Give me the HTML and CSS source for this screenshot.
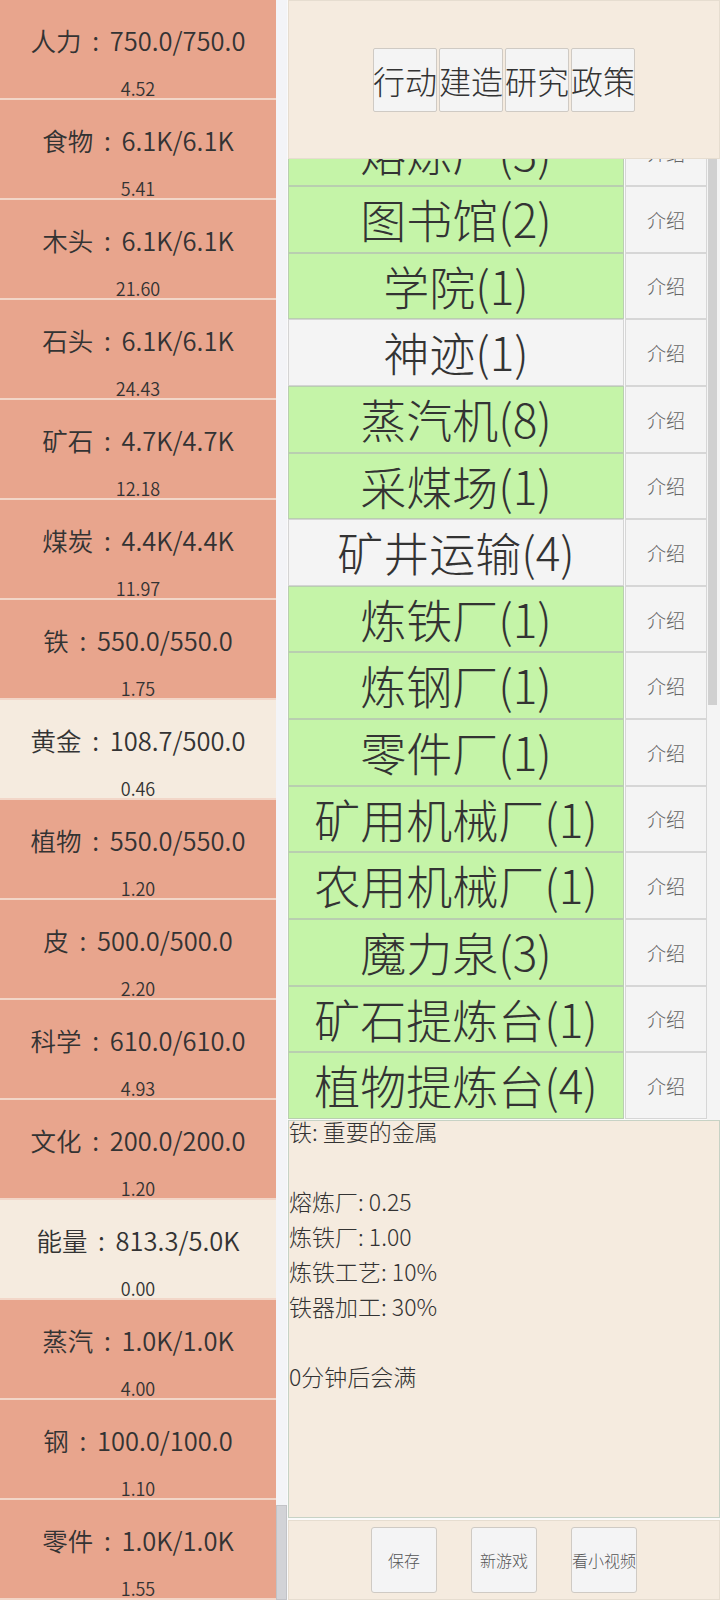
FILE: index.html
```html
<!DOCTYPE html>
<html lang="zh-CN">
<head>
    <meta charset="UTF-8">
    <meta name="viewport" content="width=device-width, initial-scale=1.0">
    <title>资源</title>
    <link rel="stylesheet" href="styles.css">
</head>
<body>
    <div class="resources">
        <div class="res"><div class="res-name">人力 : 750.0/750.0</div><div class="res-rate">4.52</div></div>
        <div class="res"><div class="res-name">食物 : 6.1K/6.1K</div><div class="res-rate">5.41</div></div>
        <div class="res"><div class="res-name">木头 : 6.1K/6.1K</div><div class="res-rate">21.60</div></div>
        <div class="res"><div class="res-name">石头 : 6.1K/6.1K</div><div class="res-rate">24.43</div></div>
        <div class="res"><div class="res-name">矿石 : 4.7K/4.7K</div><div class="res-rate">12.18</div></div>
        <div class="res"><div class="res-name">煤炭 : 4.4K/4.4K</div><div class="res-rate">11.97</div></div>
        <div class="res"><div class="res-name">铁 : 550.0/550.0</div><div class="res-rate">1.75</div></div>
        <div class="res not-full"><div class="res-name">黄金 : 108.7/500.0</div><div class="res-rate">0.46</div></div>
        <div class="res"><div class="res-name">植物 : 550.0/550.0</div><div class="res-rate">1.20</div></div>
        <div class="res"><div class="res-name">皮 : 500.0/500.0</div><div class="res-rate">2.20</div></div>
        <div class="res"><div class="res-name">科学 : 610.0/610.0</div><div class="res-rate">4.93</div></div>
        <div class="res"><div class="res-name">文化 : 200.0/200.0</div><div class="res-rate">1.20</div></div>
        <div class="res not-full"><div class="res-name">能量 : 813.3/5.0K</div><div class="res-rate">0.00</div></div>
        <div class="res"><div class="res-name">蒸汽 : 1.0K/1.0K</div><div class="res-rate">4.00</div></div>
        <div class="res"><div class="res-name">钢 : 100.0/100.0</div><div class="res-rate">1.10</div></div>
        <div class="res"><div class="res-name">零件 : 1.0K/1.0K</div><div class="res-rate">1.55</div></div>
    </div>
    <div class="scrollbar left-bar"><div class="thumb"></div></div>

    <div class="main">
        <div class="tabs">
            <button class="tab">行动</button>
            <button class="tab">建造</button>
            <button class="tab">研究</button>
            <button class="tab">政策</button>
        </div>

        <div class="buildings">
            <div class="building-list">
                <div class="rows">
                    <div class="row"><div class="bname">熔炼厂(3)</div><button class="info">介绍</button></div>
                    <div class="row"><div class="bname">图书馆(2)</div><button class="info">介绍</button></div>
                    <div class="row"><div class="bname">学院(1)</div><button class="info">介绍</button></div>
                    <div class="row"><div class="bname locked">神迹(1)</div><button class="info">介绍</button></div>
                    <div class="row"><div class="bname">蒸汽机(8)</div><button class="info">介绍</button></div>
                    <div class="row"><div class="bname">采煤场(1)</div><button class="info">介绍</button></div>
                    <div class="row"><div class="bname locked">矿井运输(4)</div><button class="info">介绍</button></div>
                    <div class="row"><div class="bname">炼铁厂(1)</div><button class="info">介绍</button></div>
                    <div class="row"><div class="bname">炼钢厂(1)</div><button class="info">介绍</button></div>
                    <div class="row"><div class="bname">零件厂(1)</div><button class="info">介绍</button></div>
                    <div class="row"><div class="bname">矿用机械厂(1)</div><button class="info">介绍</button></div>
                    <div class="row"><div class="bname">农用机械厂(1)</div><button class="info">介绍</button></div>
                    <div class="row"><div class="bname">魔力泉(3)</div><button class="info">介绍</button></div>
                    <div class="row"><div class="bname">矿石提炼台(1)</div><button class="info">介绍</button></div>
                    <div class="row"><div class="bname">植物提炼台(4)</div><button class="info">介绍</button></div>
                </div>
            </div>
            <div class="scrollbar list-bar"><div class="thumb"></div></div>
        </div>

        <div class="desc">
            <p>铁: 重要的金属</p>
            <p>&nbsp;</p>
            <p>熔炼厂: 0.25</p>
            <p>炼铁厂: 1.00</p>
            <p>炼铁工艺: 10%</p>
            <p>铁器加工: 30%</p>
            <p>&nbsp;</p>
            <p>0分钟后会满</p>
        </div>

        <div class="footer">
            <button class="small-btn">保存</button>
            <button class="small-btn">新游戏</button>
            <button class="small-btn">看小视频</button>
        </div>
    </div>
</body>
</html>
```

FILE: styles.css
```css
* {
    box-sizing: border-box;
    margin: 0;
    padding: 0;
}
body {
    display: flex;
    width: 720px;
    height: 1600px;
    overflow: hidden;
    background: #fafafa;
    font-family: "Noto Sans CJK SC", "Noto Sans", sans-serif;
    color: #333;
}
button {
    font-family: inherit;
    cursor: pointer;
}

/* left: resource list */
.resources {
    width: 276px;
    display: flex;
    flex-direction: column;
}
.res {
    height: 100px;
    background: #e8a58d;
    border-bottom: 2px solid #f2d6c8;
    display: flex;
    flex-direction: column;
    align-items: center;
}
.res.not-full {
    background: #f5ebdf;
}
.res-name {
    height: 78px;
    line-height: 80px;
    font-size: 25.5px;
    font-weight: 350;
    word-spacing: 5px;
    white-space: nowrap;
}
.res-rate {
    font-size: 18px;
    line-height: 20px;
    font-weight: 350;
}

/* fake scrollbars */
.scrollbar {
    display: flex;
    flex-direction: column;
    background: #f3f4f7;
}
.thumb {
    background: #d2d3d7;
    border: 1px solid #c2c3c7;
}
.left-bar {
    width: 11px;
    margin-right: 1px;
    justify-content: flex-end;
}
.left-bar .thumb {
    height: 95px;
}
.list-bar {
    width: 13px;
    padding-left: 1px;
    background: #f4f4f4;
}
.list-bar .thumb {
    width: 9px;
    height: 546px;
    border: none;
    background: #d0d0d0;
}

/* right side */
.main {
    width: 432px;
    display: flex;
    flex-direction: column;
}
.tabs {
    height: 159px;
    background: #f5ebdf;
    border: 1px solid #e6ddd0;
    display: flex;
    justify-content: center;
    align-items: center;
    gap: 2px;
}
.tab {
    width: 64px;
    height: 64px;
    font-size: 32px;
    font-weight: 300;
    color: #333;
    background: #f4f4f4;
    border: 1px solid #cfcac4;
    border-radius: 2px;
    white-space: nowrap;
    overflow: visible;
    display: flex;
    justify-content: center;
    align-items: center;
}

.buildings {
    height: 961px;
    display: flex;
}
.building-list {
    flex: 1;
    overflow: hidden;
}
.rows {
    margin-top: -39.6px;
}
.row {
    height: 66.64px;
    display: flex;
    gap: 1px;
}
.bname {
    width: 336px;
    background: #c5f4a8;
    border: 1px solid #b9ceb0;
    font-size: 46px;
    font-weight: 300;
    line-height: 62px;
    text-align: center;
    white-space: nowrap;
    color: #333;
}
.bname.locked {
    background: #f4f4f4;
    border-color: #d4d4d4;
}
.info {
    flex: 1;
    background: #f4f4f4;
    border: 1px solid #d6d6d6;
    font-size: 19px;
    font-weight: 300;
    color: #666;
}

.desc {
    height: 398px;
    background: #f5ebdf;
    border: 1px solid #c7d2c5;
    font-size: 23px;
    font-weight: 300;
    line-height: 35px;
    color: #333;
}
.desc p {
    white-space: pre;
}
.desc p:first-child {
    margin-top: -7px;
}

.footer {
    flex: 1;
    margin-top: 2px;
    background: #f5ebdf;
    border: 1px solid #e6ddd0;
    display: flex;
    justify-content: center;
    align-items: center;
    gap: 34px;
}
.small-btn {
    width: 66px;
    height: 66px;
    background: #f4f4f5;
    border: 1px solid #cfcac4;
    border-radius: 3px;
    font-size: 16px;
    font-weight: 300;
    color: #555;
    white-space: nowrap;
    display: flex;
    justify-content: center;
    align-items: center;
}
```
